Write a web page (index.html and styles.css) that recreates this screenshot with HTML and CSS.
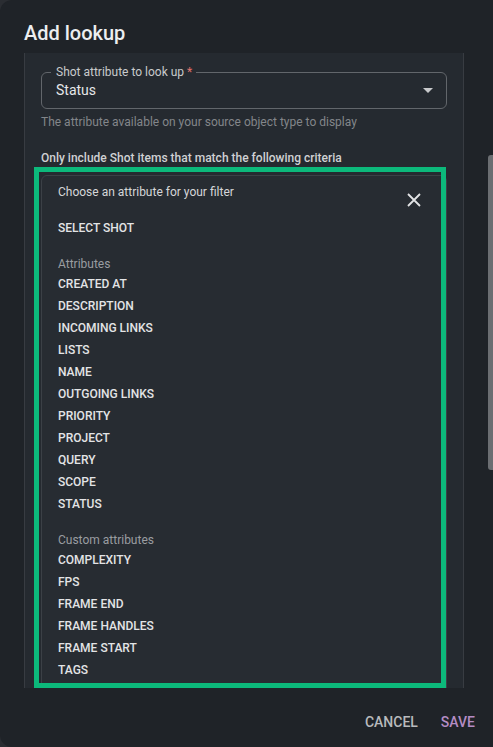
FILE: index.html
```html
<!DOCTYPE html>
<html lang="en">
<head>
    <meta charset="UTF-8">
    <meta name="viewport" content="width=device-width, initial-scale=1.0">
    <title>Add lookup</title>
    <link rel="stylesheet" href="styles.css">
</head>
<body>
    <div class="dialog">
        <h2 class="dialog-title">Add lookup</h2>

        <div class="dialog-content">
            <fieldset class="select-field">
                <legend>Shot attribute to look up <span class="required">*</span></legend>
                <div class="select-value">
                    <span>Status</span>
                    <span class="caret"></span>
                </div>
            </fieldset>
            <p class="helper">The attribute available on your source object type to display</p>

            <p class="criteria">Only include Shot items that match the following criteria</p>

            <div class="filter-card">
                <div class="filter-head">
                    <span>Choose an attribute for your filter</span>
                    <svg class="close" width="14" height="14" viewBox="0 0 14 14">
                        <path d="M1 1 L13 13 M13 1 L1 13" stroke="#e3e4e6" stroke-width="1.8" fill="none"/>
                    </svg>
                </div>

                <ul class="attr-list">
                    <li class="item top-item">SELECT SHOT</li>
                </ul>

                <ul class="attr-list">
                    <li class="group">Attributes</li>
                    <li class="item">CREATED AT</li>
                    <li class="item">DESCRIPTION</li>
                    <li class="item">INCOMING LINKS</li>
                    <li class="item">LISTS</li>
                    <li class="item">NAME</li>
                    <li class="item">OUTGOING LINKS</li>
                    <li class="item">PRIORITY</li>
                    <li class="item">PROJECT</li>
                    <li class="item">QUERY</li>
                    <li class="item">SCOPE</li>
                    <li class="item">STATUS</li>
                </ul>

                <ul class="attr-list">
                    <li class="group">Custom attributes</li>
                    <li class="item">COMPLEXITY</li>
                    <li class="item">FPS</li>
                    <li class="item">FRAME END</li>
                    <li class="item">FRAME HANDLES</li>
                    <li class="item">FRAME START</li>
                    <li class="item">TAGS</li>
                </ul>
            </div>
        </div>

        <div class="dialog-actions">
            <button class="btn">CANCEL</button>
            <button class="btn primary">SAVE</button>
        </div>

        <div class="highlight"></div>
        <div class="scrollbar"></div>
    </div>
</body>
</html>
```

FILE: styles.css
```css
body {
    margin: 0;
    background-color: #2a2d32;
    font-family: Roboto, "Liberation Sans", sans-serif;
    overflow: hidden;
}
.dialog {
    position: relative;
    height: 747px;
    background-color: #1f2328;
    border-radius: 12px 0 0 12px;
    padding-left: 24px;
    box-sizing: border-box;
}
.dialog-title {
    margin: 0;
    padding: 21px 0 8px;
    font-size: 20px;
    line-height: 24px;
    font-weight: 500;
    color: #eceef0;
}
.dialog-content {
    width: 440px;
    height: 635px;
    box-sizing: border-box;
    background-color: #252a30;
    border-left: 1px solid #383c42;
    border-right: 1px solid #383c42;
    padding: 12px 16px 0;
    overflow: hidden;
}
.select-field {
    margin: 0;
    padding: 0 13px 7px 9px;
    border: 1px solid #62666b;
    border-radius: 6px;
}
.select-field legend {
    padding: 0 4px 0 5px;
    font-size: 12px;
    line-height: 14px;
    color: #c9cacc;
}
.required {
    color: #e0716b;
}
.select-value {
    display: flex;
    align-items: center;
    justify-content: space-between;
    height: 22px;
    margin-left: 5px;
    font-size: 14px;
    color: #e6e7e9;
}
.caret {
    width: 0;
    height: 0;
    border-left: 5px solid transparent;
    border-right: 5px solid transparent;
    border-top: 5px solid #c8c9cb;
}
.helper {
    margin: 5px 0 0;
    font-size: 12px;
    line-height: 16px;
    color: #83868a;
}
.criteria {
    margin: 20px 0 0;
    font-size: 12px;
    line-height: 16px;
    font-weight: 500;
    color: #d0d1d3;
}
.filter-card {
    margin-top: 9px;
    width: 406px;
    box-sizing: border-box;
    background-color: #272c32;
    border: 1px solid #3b4046;
    border-radius: 6px;
    padding: 7px 16px 0;
}
.filter-head {
    display: flex;
    justify-content: space-between;
    align-items: flex-start;
    padding-right: 9px;
    font-size: 12px;
    line-height: 18px;
    color: #d6d7d9;
}
.close {
    margin-top: 10px;
}
.attr-list {
    list-style: none;
    margin: 0 0 16px;
    padding: 0;
}
.attr-list .top-item {
    margin-top: 10px;
}
.group {
    font-size: 12px;
    line-height: 18px;
    color: #9a9da1;
}
.item {
    font-size: 12px;
    line-height: 22px;
    font-weight: 500;
    color: #e3e4e6;
}
.dialog-actions {
    display: flex;
    justify-content: flex-end;
    gap: 7px;
    padding: 22px 10px 0 0;
}
.btn {
    background: none;
    border: none;
    padding: 0 8px;
    font-family: inherit;
    font-size: 14px;
    line-height: 24px;
    font-weight: 500;
    color: #b8babd;
}
.btn.primary {
    color: #b48cc4;
}
/* green selection frame drawn over the filter card */
.highlight {
    position: absolute;
    left: 34px;
    top: 167px;
    width: 412px;
    height: 521px;
    box-sizing: border-box;
    border: 5px solid #0cb97b;
}
.scrollbar {
    position: absolute;
    right: -3px;
    top: 155px;
    width: 8px;
    height: 315px;
    border-radius: 3px;
    background-color: #6b6e72;
}
```
